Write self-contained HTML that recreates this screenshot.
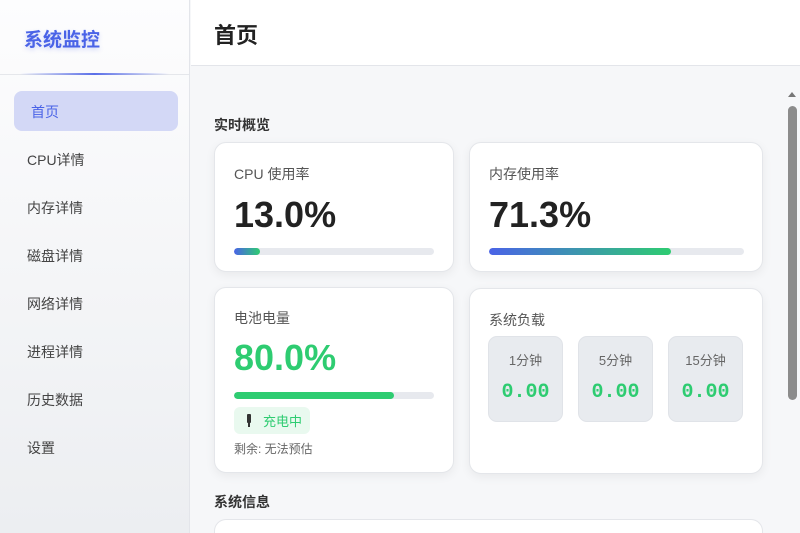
<!DOCTYPE html>
<html style="height:533px;overflow:hidden"><head><meta charset="utf-8"><style>
*{box-sizing:border-box;margin:0;padding:0}
body{width:800px;height:533px;overflow:hidden;font-family:"Liberation Sans","Noto Sans CJK SC",sans-serif;background:#f6f7f9;position:relative}
.sb{position:absolute;left:0;top:0;width:190px;height:533px;background:linear-gradient(#fdfdfe,#eceef1);border-right:1px solid #e3e5ea}
.logo{height:75px;border-bottom:1px solid #e5e7eb;position:relative;font-size:19px;font-weight:bold;color:#4a63e7;padding:25px 0 0 24px;text-shadow:0 2px 4px rgba(74,99,231,.25)}
.logo:after{content:"";position:absolute;left:20px;right:20px;bottom:-1px;height:2px;background:linear-gradient(90deg,transparent,#5a6fe8,transparent)}
.nav{position:absolute;left:14px;width:164px;height:40px;font-size:14px;color:#444;padding:11px 0 0 13px}
.nav.a{background:#d3d8f6;color:#4a63e7;border-radius:8px;padding-left:17px}
.hd{position:absolute;left:191px;top:0;right:0;height:66px;background:#fff;border-bottom:1px solid #e3e5ea;font-size:22px;font-weight:bold;color:#222;padding:18px 0 0 23px}
.st{position:absolute;left:214px;font-size:14px;font-weight:bold;color:#333}
.card{position:absolute;background:#fff;border:1px solid #e4e6ea;border-radius:12px;box-shadow:0 3px 10px rgba(0,0,0,.06)}
.lb{position:absolute;left:19px;font-size:14px;color:#555}
.big{position:absolute;left:19px;font-size:36px;font-weight:bold;color:#222}
.bar{position:absolute;left:19px;height:7px;border-radius:4px;background:#e7e9ee;overflow:hidden}
.bar i{display:block;height:100%;border-radius:4px}
.ld{position:absolute;top:47px;width:75px;height:86px;background:#e8ebef;border-radius:9px;border:1px solid #e0e3e8;text-align:center}
.ld b{display:block;font-weight:normal;font-size:13px;color:#666;margin-top:13px}
.ld s{display:block;text-decoration:none;font-family:"Liberation Mono",monospace;font-weight:bold;font-size:20px;color:#2ecc71;margin-top:12px}
.scr{position:absolute;left:788px;top:106px;width:9px;height:294px;background:#8c8c8c;border-radius:5px}
</style></head><body>
<div class="sb"><div class="logo">系统监控</div>
<div class="nav a" style="top:91px">首页</div>
<div class="nav" style="top:139px">CPU详情</div>
<div class="nav" style="top:187px">内存详情</div>
<div class="nav" style="top:235px">磁盘详情</div>
<div class="nav" style="top:283px">网络详情</div>
<div class="nav" style="top:331px">进程详情</div>
<div class="nav" style="top:379px">历史数据</div>
<div class="nav" style="top:427px">设置</div>
</div>
<div class="hd">首页</div>
<div class="st" style="top:115px">实时概览</div>
<div class="card" style="left:214px;top:142px;width:240px;height:130px">
<div class="lb" style="top:21px">CPU 使用率</div><div class="big" style="top:51px">13.0%</div>
<div class="bar" style="top:105px;width:200px"><i style="width:13%;background:linear-gradient(90deg,#4a63e7,#2ecc71)"></i></div></div>
<div class="card" style="left:469px;top:142px;width:294px;height:130px">
<div class="lb" style="top:21px">内存使用率</div><div class="big" style="top:51px">71.3%</div>
<div class="bar" style="top:105px;width:255px"><i style="width:71.3%;background:linear-gradient(90deg,#4a63e7,#2ecc71)"></i></div></div>
<div class="card" style="left:214px;top:287px;width:240px;height:186px">
<div class="lb" style="top:20px">电池电量</div><div class="big" style="top:49px;color:#2ecc71">80.0%</div>
<div class="bar" style="top:104px;width:200px"><i style="width:80%;background:#2ecc71"></i></div>
<div style="position:absolute;left:19px;top:119px;width:76px;height:27px;background:#e9f9ef;border-radius:6px;font-size:13px;color:#2ecc71;padding:4px 0 0 29px"><span style="position:absolute;left:13px;top:7px;width:4px;height:9px;background:#333;border-radius:1px"></span><span style="position:absolute;left:14px;top:15px;width:2px;height:5px;background:#333"></span>充电中</div>
<div style="position:absolute;left:19px;top:152px;font-size:12px;color:#666">剩余: 无法预估</div></div>
<div class="card" style="left:469px;top:288px;width:294px;height:186px">
<div class="lb" style="top:21px">系统负载</div>
<div class="ld" style="left:18px"><b>1分钟</b><s>0.00</s></div>
<div class="ld" style="left:108px"><b>5分钟</b><s>0.00</s></div>
<div class="ld" style="left:198px"><b>15分钟</b><s>0.00</s></div></div>
<div class="st" style="top:492px">系统信息</div>
<div class="card" style="left:214px;top:519px;width:549px;height:14px;border-bottom:none;border-radius:12px 12px 0 0;box-shadow:none"></div>
<div style="position:absolute;left:788px;top:92px;border:4px solid transparent;border-bottom:5px solid #777;border-top:0;width:0"></div>
<div class="scr"></div>
</body></html>
